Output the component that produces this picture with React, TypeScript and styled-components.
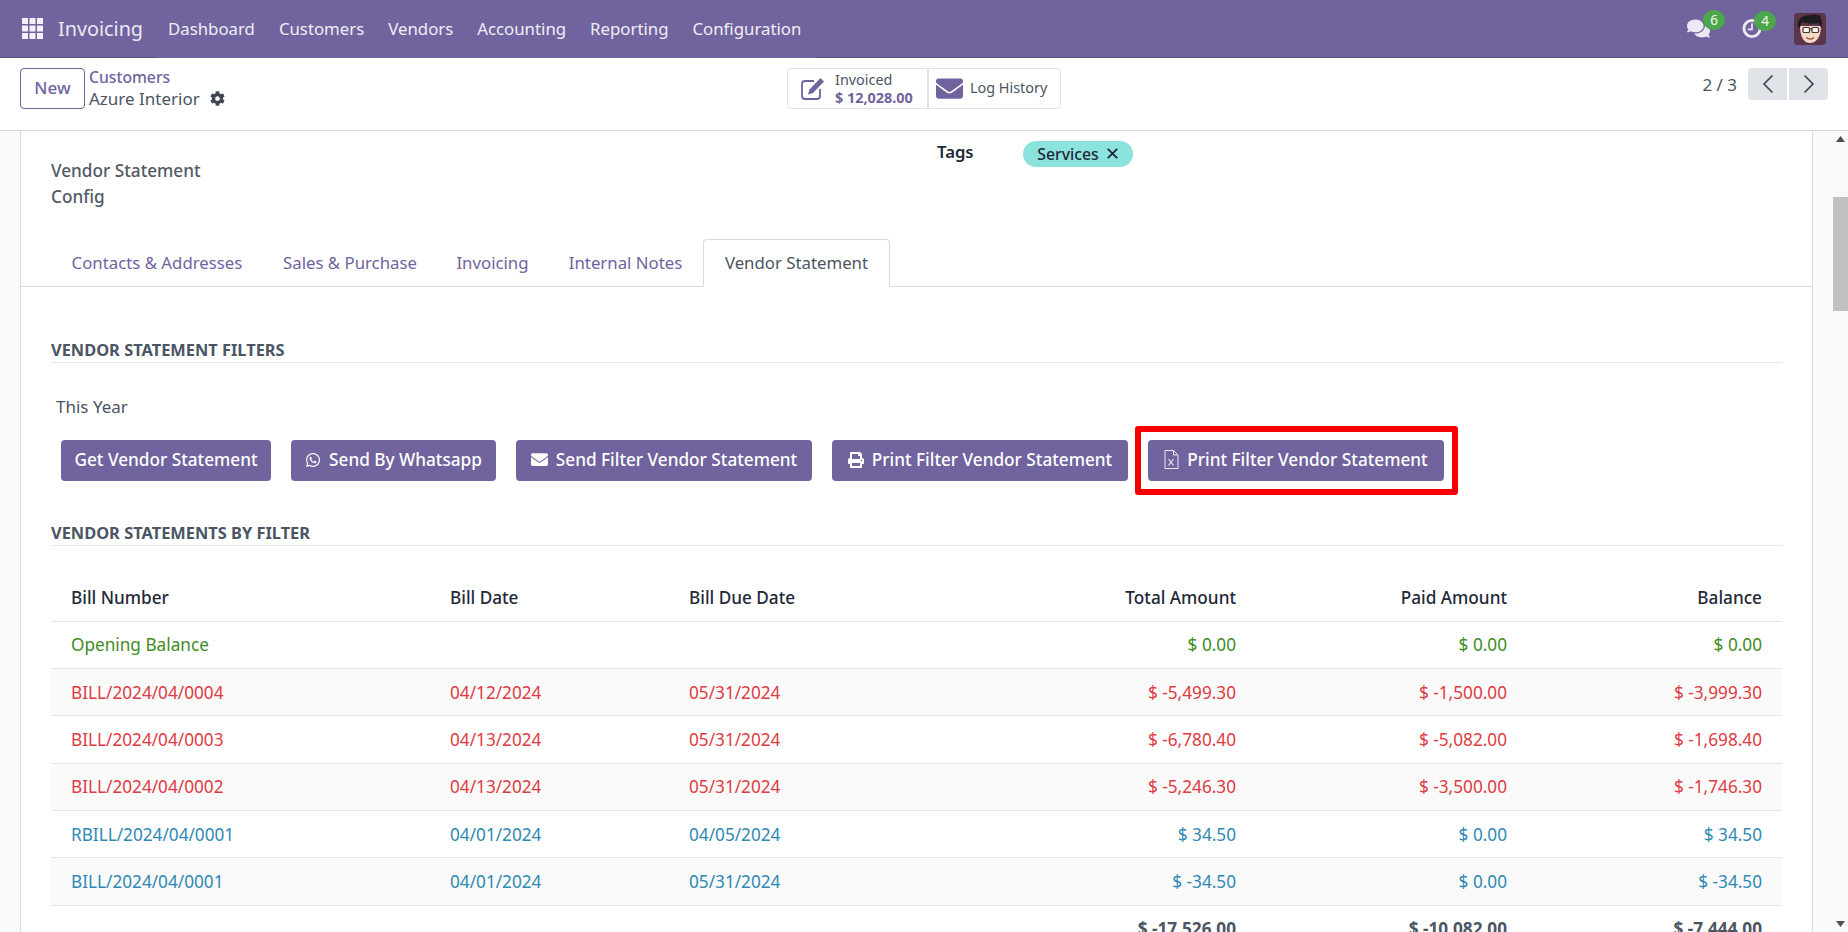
import React from "react";
import styled, { createGlobalStyle } from "styled-components";
import { FaCog, FaComments, FaEnvelope, FaWhatsapp, FaPrint } from "react-icons/fa";

const PRIMARY = "#71639e";
const FONT = `"Noto Sans", "Open Sans", sans-serif`;

const Global = createGlobalStyle`
  * { box-sizing: border-box; }
  html, body { margin: 0; height: 100%; overflow: hidden; }
  body { font-family: ${FONT}; font-size: 17px; color: #4b5563; background: #fff; }
  #root { height: 100%; }
`;

const Page = styled.div`
  height: 932px;
  display: flex;
  flex-direction: column;
  overflow: hidden;
`;

const NavBar = styled.header`
  height: 58px;
  flex: none;
  display: flex;
  background: ${PRIMARY};
  color: #f4f2f8;
`;
const Brand = styled.div`
  width: 156px;
  flex: none;
  display: flex;
  align-items: center;
  gap: 15px;
  padding-left: 22px;
  border-bottom: 1px solid #5a4e80;
`;
const BrandName = styled.span`
  font-size: 19.8px;
  color: #ebe8f2;
`;
const Menu = styled.nav`
  width: 660px;
  flex: none;
  display: flex;
  align-items: center;
  padding-bottom: 1px;
`;
const MenuItem = styled.a`
  padding: 0 12px;
  font-size: 16.8px;
  color: #f0eef5;
`;
const Tray = styled.div`
  flex: 1;
  display: flex;
  justify-content: flex-end;
  align-items: center;
  padding-right: 22px;
  border-bottom: 1px solid #5a4e80;
`;
const TrayIcon = styled.div<{ $w: number; $mr: number }>`
  position: relative;
  width: ${(p) => p.$w}px;
  margin-right: ${(p) => p.$mr}px;
  display: flex;
  color: #ece9f5;
`;
const Badge = styled.span<{ $left: number }>`
  position: absolute;
  left: ${(p) => p.$left}px;
  top: -7px;
  width: 22px;
  height: 20px;
  border-radius: 10px;
  background: #4ca64c;
  color: #f2f7ef;
  font-size: 13.5px;
  display: flex;
  align-items: center;
  justify-content: center;
`;

const ControlPanel = styled.div`
  height: 73px;
  flex: none;
  display: grid;
  grid-template-columns: 1fr auto 1fr;
  padding: 10px 20px 0;
  background: #fff;
  border-bottom: 1px solid #d8dadd;
  align-items: start;
`;
const PanelLeft = styled.div`
  display: flex;
  gap: 4px;
`;
const NewButton = styled.button`
  width: 65px;
  height: 41px;
  border: 1px solid ${PRIMARY};
  border-radius: 4px;
  background: #fff;
  color: ${PRIMARY};
  font: 500 17px ${FONT};
  padding: 0 0 2px;
`;
const Crumbs = styled.div`
  display: flex;
  flex-direction: column;
  justify-content: center;
  height: 40px;
  line-height: 21px;
`;
const CrumbLink = styled.a`
  color: ${PRIMARY};
  font-weight: 500;
  font-size: 15.7px;
`;
const CrumbCurrent = styled.span`
  display: flex;
  align-items: center;
  gap: 10px;
  color: #4b5563;
  font-size: 17px;
`;
const StatGroup = styled.div`
  display: flex;
  height: 41px;
  border: 1px solid #dee2e6;
  border-radius: 4px;
`;
const StatButton = styled.div<{ $w: number; $pl: number; $gap: number }>`
  width: ${(p) => p.$w}px;
  display: flex;
  align-items: center;
  padding-left: ${(p) => p.$pl}px;
  gap: ${(p) => p.$gap}px;
  color: #4b5563;
  font-size: 14.4px;
  & + & {
    border-left: 2px solid #dee2e6;
  }
`;
const StatIcon = styled.span`
  display: flex;
  color: ${PRIMARY};
`;
const StatText = styled.div`
  display: flex;
  flex-direction: column;
  line-height: 18px;
`;
const StatValue = styled.span`
  color: ${PRIMARY};
  font-weight: 700;
`;
const StatLabel = styled.span`
  padding-bottom: 2px;
`;
const PanelRight = styled.div`
  display: flex;
  justify-content: flex-end;
  align-items: center;
  height: 32px;
`;
const PagerText = styled.span`
  margin-right: 11px;
  color: #4b5563;
`;
const PagerButton = styled.button<{ $side: "l" | "r" }>`
  width: 39px;
  height: 32px;
  border: 0;
  padding: 0;
  margin-left: ${(p) => (p.$side === "r" ? "2px" : "0")};
  background: #e0e3e7;
  border-radius: ${(p) => (p.$side === "l" ? "4px 0 0 4px" : "0 4px 4px 0")};
  display: flex;
  align-items: center;
  justify-content: center;
  color: #374151;
`;

const Body = styled.div`
  flex: 1;
  min-height: 0;
  display: flex;
  background: #f9fafb;
  overflow: hidden;
`;
const LeftGutter = styled.div`
  width: 21px;
  flex: none;
  border-right: 1px solid #d8dadd;
`;
const Sheet = styled.main`
  flex: 1;
  min-width: 0;
  padding: 10px 30px 0;
  background: #fff;
`;
const RightGutter = styled.div`
  width: 21px;
  flex: none;
  border-left: 1px solid #d8dadd;
`;
const ScrollTrack = styled.div`
  width: 15px;
  flex: none;
  display: flex;
  flex-direction: column;
  align-items: center;
  background: #f8f9fa;
  position: relative;
`;
const ScrollThumb = styled.div`
  position: absolute;
  top: 66px;
  left: 0;
  width: 15px;
  height: 114px;
  background: #c1c1c1;
`;
const ScrollArrow = styled.svg`
  flex: none;
  margin-top: 5px;
  &:last-child {
    margin-top: auto;
    margin-bottom: 5px;
  }
`;

const TopGrid = styled.div`
  height: 98px;
  display: grid;
  grid-template-columns: 886px 1fr;
`;
const ConfigLabel = styled.div`
  padding-top: 17px;
  font-weight: 500;
  line-height: 26px;
  font-size: 17.2px;
  color: #525a66;
`;
const TagsRow = styled.div`
  display: flex;
  align-items: flex-start;
`;
const TagsLabel = styled.span`
  width: 86px;
  font-size: 16.7px;
  font-weight: 600;
  color: #1f2937;
  line-height: 21px;
`;
const TagPill = styled.span`
  width: 110px;
  height: 26px;
  border-radius: 13px;
  background: #8ae3dc;
  color: #1f2937;
  font-weight: 500;
  font-size: 15.8px;
  display: flex;
  align-items: center;
  justify-content: center;
  gap: 8px;
  padding: 0 1px 1px 0;
`;

const Tabs = styled.div`
  height: 48px;
  margin: 0 -30px;
  padding-left: 30px;
  display: flex;
  border-bottom: 1px solid #d8dadd;
`;
const Tab = styled.a<{ $active?: boolean; $w: number }>`
  width: ${(p) => p.$w}px;
  height: 48px;
  padding-bottom: 2px;
  display: flex;
  align-items: center;
  justify-content: center;
  white-space: nowrap;
  border: 1px solid ${(p) => (p.$active ? "#d8dadd" : "transparent")};
  border-bottom-color: ${(p) => (p.$active ? "#fff" : "transparent")};
  border-radius: 4px 4px 0 0;
  color: ${(p) => (p.$active ? "#4b5563" : PRIMARY)};
  font-size: 16.8px;
  background: ${(p) => (p.$active ? "#fff" : "transparent")};
`;

const SectionTitle = styled.h3<{ $mt: number }>`
  margin: ${(p) => p.$mt}px 0 0;
  height: 30px;
  line-height: 33px;
  font-size: 16.4px;
  font-weight: 700;
  color: #4b5563;
  border-bottom: 1.5px solid #e5e7eb;
`;
const Period = styled.div`
  margin: 33px 0 0 5px;
  height: 22px;
  line-height: 22px;
`;
const ButtonRow = styled.div`
  display: flex;
  gap: 20px;
  margin: 22px 0 0 10px;
`;
const ActionButton = styled.button<{ $w: number }>`
  width: ${(p) => p.$w}px;
  height: 41px;
  border: 0;
  border-radius: 4px;
  padding: 0 0 2px;
  background: ${PRIMARY};
  color: #fff;
  font: 500 17.2px ${FONT};
  display: flex;
  align-items: center;
  justify-content: center;
  gap: 8px;
  white-space: nowrap;
`;
const Highlight = styled.span`
  position: relative;
  display: flex;
  &::after {
    content: "";
    position: absolute;
    inset: -14px -14px -14px -13px;
    border: 6px solid #f80000;
    border-radius: 3px;
    pointer-events: none;
  }
`;

const Table = styled.table`
  width: 100%;
  border-collapse: collapse;
  margin-top: 28px;
  table-layout: fixed;
`;
const Th = styled.th<{ $w: number; $right?: boolean }>`
  width: ${(p) => p.$w}px;
  height: 47px;
  padding: 0 20px;
  text-align: ${(p) => (p.$right ? "right" : "left")};
  font-size: 17.2px;
  font-weight: 500;
  color: #1f2937;
  border-bottom: 1px solid #dee2e6;
`;
const Tr = styled.tr<{ $striped: boolean }>`
  background: ${(p) => (p.$striped ? "#fafafa" : "#fff")};
`;
const Td = styled.td<{ $tone: string; $right?: boolean }>`
  height: 47.4px;
  padding: 0 20px;
  text-align: ${(p) => (p.$right ? "right" : "left")};
  color: ${(p) => p.$tone};
  font-size: 17.2px;
  border-bottom: 1.5px solid #e4e6ea;
`;
const TotalTd = styled.td`
  height: 47px;
  padding: 11px 20px 0;
  text-align: right;
  font-weight: 700;
  color: #4b5563;
  font-size: 17.2px;
  vertical-align: top;
`;

const AppsIcon = () => (
  <svg width="21" height="21" viewBox="0 0 21 21" fill="#f4f2f8">
    {[0, 7.5, 15].flatMap((y) =>
      [0, 7.5, 15].map((x) => <rect key={`${x}-${y}`} x={x} y={y} width="6" height="6" />)
    )}
  </svg>
);

const Chevron = ({ dir }: { dir: "l" | "r" }) => (
  <svg width="14" height="20" viewBox="0 0 14 20" fill="none" stroke="currentColor" strokeWidth="1.6">
    <path d={dir === "l" ? "M11.5 1.5 3 10l8.5 8.5" : "M2.5 1.5 11 10l-8.5 8.5"} />
  </svg>
);

const ClockIcon = () => (
  <svg width="21" height="21" viewBox="0 0 21 21" fill="none" stroke="#ece9f5">
    <circle cx="10.5" cy="10.5" r="8.5" strokeWidth="3" />
    <path d="M10.5 5v6.5H6" strokeWidth="1.8" />
  </svg>
);

const EditIcon = () => (
  <svg width="24" height="23" viewBox="0 0 24 23">
    <path d="M13 4H4a3 3 0 0 0-3 3v12a3 3 0 0 0 3 3h12a3 3 0 0 0 3-3v-7" fill="none" stroke={PRIMARY} strokeWidth="1.8" />
    <path d="M19.5 1 23 4.5 12 16l-5 1.5L8.5 12.500z" fill={PRIMARY} />
  </svg>
);

const CloseIcon = () => (
  <svg width="11" height="11" viewBox="0 0 11 11" fill="none" stroke="#1f2937" strokeWidth="1.8">
    <path d="M.8.8l9.4 9.4M10.2.8.8 10.2" />
  </svg>
);

const ExcelIcon = () => (
  <svg width="15" height="19" viewBox="0 0 15 19" fill="none" stroke="#ece9f5" strokeWidth="1">
    <path d="M1 .5h8.5L14 5v13.500H1z" />
    <path d="M9.5.5V5H14" />
    <path d="M4.5 9l5 6.5M9.5 9l-5 6.5" strokeWidth="1.2" />
  </svg>
);

const Avatar = () => (
  <svg width="32" height="32" viewBox="0 0 32 32">
    <rect width="32" height="32" rx="4" fill="#5d3549" />
    <path d="M6 13c0 11 4 17 10 17s11-6 11-17z" fill="#f6d9c4" />
    <path d="M4 14C2 5 10 2 17 2c3-1 7 0 10 1-1 1-1 2 0 3 2 3 1 7 0 9l-2-5c-5 1-12 1-17-1-1 2-2 4-2 6z" fill="#1d1c20" />
    <g fill="none" stroke="#3a3a3a" strokeWidth="1.2">
      <rect x="9" y="14.5" width="6.5" height="5" rx="1" fill="#fbf4ec" />
      <rect x="18" y="14.5" width="6.5" height="5" rx="1" fill="#fbf4ec" />
      <path d="M15.5 16H18" />
    </g>
    <path d="M12 24.500c3 2 6 2 8 0" fill="none" stroke="#8c4a3d" strokeWidth="1.2" />
  </svg>
);

type Tone = "g" | "r" | "b";
const tones: Record<Tone, string> = { g: "#3f8c1f", r: "#df3b42", b: "#2f89b4" };
const rows: { tone: Tone; c: string[] }[] = [
  { tone: "g", c: ["Opening Balance", "", "", "$ 0.00", "$ 0.00", "$ 0.00"] },
  { tone: "r", c: ["BILL/2024/04/0004", "04/12/2024", "05/31/2024", "$ -5,499.30", "$ -1,500.00", "$ -3,999.30"] },
  { tone: "r", c: ["BILL/2024/04/0003", "04/13/2024", "05/31/2024", "$ -6,780.40", "$ -5,082.00", "$ -1,698.40"] },
  { tone: "r", c: ["BILL/2024/04/0002", "04/13/2024", "05/31/2024", "$ -5,246.30", "$ -3,500.00", "$ -1,746.30"] },
  { tone: "b", c: ["RBILL/2024/04/0001", "04/01/2024", "04/05/2024", "$ 34.50", "$ 0.00", "$ 34.50"] },
  { tone: "b", c: ["BILL/2024/04/0001", "04/01/2024", "05/31/2024", "$ -34.50", "$ 0.00", "$ -34.50"] },
];
const columns = [
  { label: "Bill Number", w: 379 },
  { label: "Bill Date", w: 239 },
  { label: "Bill Due Date", w: 287 },
  { label: "Total Amount", w: 300, right: true },
  { label: "Paid Amount", w: 271, right: true },
  { label: "Balance", w: 255, right: true },
];
const tabs = [
  { label: "Contacts & Addresses", w: 212 },
  { label: "Sales & Purchase", w: 174 },
  { label: "Invoicing", w: 111 },
  { label: "Internal Notes", w: 155 },
  { label: "Vendor Statement", w: 187, active: true },
];

export default function App() {
  return (
    <Page>
      <Global />
      <NavBar>
        <Brand>
          <AppsIcon />
          <BrandName>Invoicing</BrandName>
        </Brand>
        <Menu>
          {["Dashboard", "Customers", "Vendors", "Accounting", "Reporting", "Configuration"].map((m) => (
            <MenuItem key={m}>{m}</MenuItem>
          ))}
        </Menu>
        <Tray>
          <TrayIcon $w={23} $mr={32}>
            <FaComments size={23} />
            <Badge $left={16}>6</Badge>
          </TrayIcon>
          <TrayIcon $w={20} $mr={32}>
            <ClockIcon />
            <Badge $left={12}>4</Badge>
          </TrayIcon>
          <Avatar />
        </Tray>
      </NavBar>
      <ControlPanel>
        <PanelLeft>
          <NewButton>New</NewButton>
          <Crumbs>
            <CrumbLink>Customers</CrumbLink>
            <CrumbCurrent>
              Azure Interior <FaCog size={15} color="#3f4752" />
            </CrumbCurrent>
          </Crumbs>
        </PanelLeft>
        <StatGroup>
          <StatButton $w={139} $pl={13} $gap={10}>
            <StatIcon>
              <EditIcon />
            </StatIcon>
            <StatText>
              <span>Invoiced</span>
              <StatValue>$ 12,028.00</StatValue>
            </StatText>
          </StatButton>
          <StatButton $w={133} $pl={7} $gap={7}>
            <StatIcon>
              <FaEnvelope size={27} />
            </StatIcon>
            <StatLabel>Log History</StatLabel>
          </StatButton>
        </StatGroup>
        <PanelRight>
          <PagerText>2 / 3</PagerText>
          <PagerButton $side="l">
            <Chevron dir="l" />
          </PagerButton>
          <PagerButton $side="r">
            <Chevron dir="r" />
          </PagerButton>
        </PanelRight>
      </ControlPanel>
      <Body>
        <LeftGutter />
        <Sheet>
          <TopGrid>
            <ConfigLabel>
              Vendor Statement
              <br />
              Config
            </ConfigLabel>
            <TagsRow>
              <TagsLabel>Tags</TagsLabel>
              <TagPill>
                Services <CloseIcon />
              </TagPill>
            </TagsRow>
          </TopGrid>
          <Tabs>
            {tabs.map((t) => (
              <Tab key={t.label} $w={t.w} $active={t.active}>
                {t.label}
              </Tab>
            ))}
          </Tabs>
          <SectionTitle $mt={46}>VENDOR STATEMENT FILTERS</SectionTitle>
          <Period>This Year</Period>
          <ButtonRow>
            <ActionButton $w={210}>Get Vendor Statement</ActionButton>
            <ActionButton $w={205}>
              <FaWhatsapp size={16} /> Send By Whatsapp
            </ActionButton>
            <ActionButton $w={296}>
              <FaEnvelope size={17} /> Send Filter Vendor Statement
            </ActionButton>
            <ActionButton $w={296}>
              <FaPrint size={16} /> Print Filter Vendor Statement
            </ActionButton>
            <Highlight>
              <ActionButton $w={296}>
                <ExcelIcon /> Print Filter Vendor Statement
              </ActionButton>
            </Highlight>
          </ButtonRow>
          <SectionTitle $mt={35}>VENDOR STATEMENTS BY FILTER</SectionTitle>
          <Table>
            <thead>
              <tr>
                {columns.map((c) => (
                  <Th key={c.label} $w={c.w} $right={c.right}>
                    {c.label}
                  </Th>
                ))}
              </tr>
            </thead>
            <tbody>
              {rows.map((r, i) => (
                <Tr key={r.c[0]} $striped={i % 2 === 1}>
                  {r.c.map((v, j) => (
                    <Td key={j} $tone={tones[r.tone]} $right={j > 2}>
                      {v}
                    </Td>
                  ))}
                </Tr>
              ))}
              <tr>
                <TotalTd colSpan={3} />
                <TotalTd>$ -17,526.00</TotalTd>
                <TotalTd>$ -10,082.00</TotalTd>
                <TotalTd>$ -7,444.00</TotalTd>
              </tr>
            </tbody>
          </Table>
        </Sheet>
        <RightGutter />
        <ScrollTrack>
          <ScrollArrow width="9" height="6" viewBox="0 0 9 6">
            <path d="M4.5 0 9 6H0z" fill="#505050" />
          </ScrollArrow>
          <ScrollThumb />
          <ScrollArrow width="9" height="6" viewBox="0 0 9 6">
            <path d="M0 0h9L4.5 6z" fill="#505050" />
          </ScrollArrow>
        </ScrollTrack>
      </Body>
    </Page>
  );
}
